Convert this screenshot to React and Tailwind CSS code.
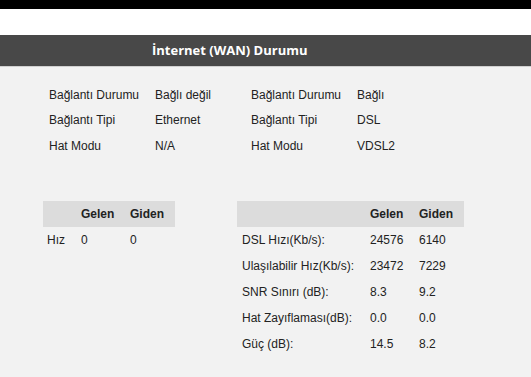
export default function App() {
  const info = [
    ["Bağlantı Durumu", "Bağlı değil", "Bağlantı Durumu", "Bağlı"],
    ["Bağlantı Tipi", "Ethernet", "Bağlantı Tipi", "DSL"],
    ["Hat Modu", "N/A", "Hat Modu", "VDSL2"],
  ];
  const dsl = [
    ["DSL Hızı(Kb/s):", "24576", "6140"],
    ["Ulaşılabilir Hız(Kb/s):", "23472", "7229"],
    ["SNR Sınırı (dB):", "8.3", "9.2"],
    ["Hat Zayıflaması(dB):", "0.0", "0.0"],
    ["Güç (dB):", "14.5", "8.2"],
  ];
  return (
    <div className="w-[531px] h-[377px] overflow-hidden bg-[#f2f2f2] text-[12px] text-[#222]" style={{ fontFamily: '"Liberation Sans", Arial, sans-serif' }}>
      <div className="h-[9px] bg-black" />
      <div className="h-[26px] bg-white" />
      <div className="h-[31px] bg-[#484848] flex items-center pl-[152px] text-white font-bold text-[13px] border-b border-[#d0d0d0] box-content" style={{ fontFamily: '"Open Sans", sans-serif' }}>
        İnternet (WAN) Durumu
      </div>
      <div className="pt-[15px] pl-[49px]">
        {info.map((r, i) => (
          <div key={i} className="flex h-[25.5px] items-center">
            <div className="w-[106px]">{r[0]}</div>
            <div className="w-[96px]">{r[1]}</div>
            <div className="w-[106px]">{r[2]}</div>
            <div>{r[3]}</div>
          </div>
        ))}
      </div>
      <div className="flex items-start pl-[43px] mt-[42px] gap-[62px]">
        <div className="w-[132px]">
          <div className="flex h-[26px] items-center bg-[#dcdcdc] font-bold">
            <div className="w-[34px]" />
            <div className="w-[49px] pl-[4px]">Gelen</div>
            <div className="w-[49px] pl-[4px]">Giden</div>
          </div>
          <div className="flex h-[26px] items-center">
            <div className="w-[34px] pl-[4px]">Hız</div>
            <div className="w-[49px] pl-[4px]">0</div>
            <div className="w-[49px] pl-[4px]">0</div>
          </div>
        </div>
        <div className="w-[227px]">
          <div className="flex h-[26px] items-center bg-[#dcdcdc] font-bold">
            <div className="w-[128px]" />
            <div className="w-[49px] pl-[5px]">Gelen</div>
            <div className="w-[50px] pl-[5px]">Giden</div>
          </div>
          {dsl.map((r, i) => (
            <div key={i} className="flex h-[26px] items-center">
              <div className="w-[128px] pl-[5px] whitespace-nowrap">{r[0]}</div>
              <div className="w-[49px] pl-[5px]">{r[1]}</div>
              <div className="w-[50px] pl-[5px]">{r[2]}</div>
            </div>
          ))}
        </div>
      </div>
    </div>
  );
}
